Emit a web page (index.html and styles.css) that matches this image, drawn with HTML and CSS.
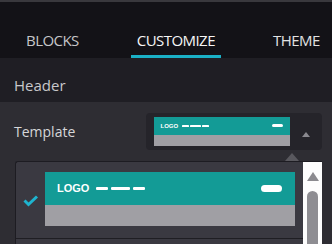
FILE: index.html
```html
<!DOCTYPE html>
<html lang="en">
<head>
  <meta charset="UTF-8" />
  <meta name="viewport" content="width=device-width, initial-scale=1.0"/>
  <title>Customize</title>
  <link rel="stylesheet" href="styles.css">
</head>
<body>
  <div class="tabs">
    <div class="tab">BLOCKS</div>
    <div class="tab active">CUSTOMIZE</div>
    <div class="tab">THEME</div>
  </div>

  <div class="section-title">Header</div>

  <div class="field">
    <label>Template</label>
    <div class="select">
      <div class="preview small">
        <div class="preview-bar">
          <span class="preview-logo">LOGO</span>
          <span class="dash"></span><span class="dash long"></span><span class="dash"></span>
          <span class="pill"></span>
        </div>
        <div class="preview-body"></div>
      </div>
      <div class="select-arrow"><span class="tri"></span></div>
    </div>

    <div class="dropdown">
      <span class="pointer"></span>
      <div class="options">
        <div class="option">
          <div class="check">
            <svg width="16" height="12" viewBox="0 0 16 12">
              <polyline points="1.5,5.5 5.5,9.5 14,1.5" fill="none" stroke="#1eb4cf" stroke-width="3"/>
            </svg>
          </div>
          <div class="preview big">
            <div class="preview-bar">
              <span class="preview-logo">LOGO</span>
              <span class="dash"></span><span class="dash long"></span><span class="dash"></span>
              <span class="pill"></span>
            </div>
            <div class="preview-body"></div>
          </div>
        </div>
      </div>
      <div class="scrollbar">
        <span class="scroll-up"></span>
        <span class="thumb"></span>
      </div>
    </div>
  </div>
</body>
</html>
```

FILE: styles.css
```css
body {
  margin: 0;
  padding: 0;
  width: 332px;
  height: 244px;
  overflow: hidden;
  background: #2e2d33;
  font-family: 'Open Sans', 'Noto Sans', sans-serif;
}

.tabs {
  display: flex;
  align-items: flex-end;
  gap: 46px;
  height: 56px;
  padding-left: 20px;
  background: #131217;
  border-top: 2px solid #39383d;
}

.tab {
  padding: 0 6px 5px;
  line-height: 20px;
  font-size: 15px;
  letter-spacing: -0.55px;
  color: #c6c6c9;
  border-bottom: 3px solid transparent;
}

.tab.active {
  color: #f6f6f6;
  border-bottom-color: #1ab0c6;
}

.tab:last-child {
  color: #e2e2e2;
}

.section-title {
  height: 27px;
  padding: 17px 0 0 14px;
  line-height: 20px;
  font-size: 15px;
  color: #c8c8cb;
  background: #1f1e24;
}

.field {
  position: relative;
  display: flex;
  align-items: center;
  justify-content: space-between;
  padding: 11px 10px 0 14px;
}

label {
  font-size: 14px;
  color: #d6d6d8;
}

.select {
  display: flex;
  align-items: center;
  width: 168px;
  height: 37px;
  padding-left: 8px;
  background: #25242a;
  border-radius: 4px;
}

.select-arrow {
  flex: 1;
  display: flex;
  justify-content: center;
  padding-top: 5px;
}

.tri {
  border-left: 4.5px solid transparent;
  border-right: 4.5px solid transparent;
  border-bottom: 5px solid #8a898f;
}

/* template thumbnail, sized in em so it scales */
.preview {
  width: 22.73em;
  flex-shrink: 0;
}

.preview.small {
  font-size: 6px;
}

.preview.big {
  font-size: 11px;
}

.preview-bar {
  display: flex;
  align-items: center;
  height: 3em;
  padding: 0 1.18em 0 1.09em;
  background: #139b96;
}

.preview-logo {
  font-family: 'Liberation Sans', Arial, sans-serif;
  font-weight: bold;
  color: #fff;
  line-height: 1;
  margin-right: 0.64em;
}

.dash {
  width: 1.09em;
  height: 0.36em;
  margin-right: 0.27em;
  background: #fff;
  border-radius: 0.1em;
}

.dash.long {
  width: 1.73em;
}

.pill {
  width: 1.91em;
  height: 0.55em;
  margin-left: auto;
  background: #fff;
  border-radius: 1em;
}

.preview-body {
  height: 1.91em;
  background: #a09fa4;
}

.dropdown {
  position: absolute;
  top: 59px;
  left: 15px;
  width: 306px;
  height: 82px;
  display: flex;
  background: #3a3941;
  border-top: 1px solid #1d1c22;
  border-left: 1px solid #1d1c22;
  border-top-left-radius: 3px;
}

.pointer {
  position: absolute;
  top: -9px;
  left: 269px;
  border-left: 7.5px solid transparent;
  border-right: 7.5px solid transparent;
  border-bottom: 8px solid #59585e;
}

.options {
  flex: 1;
}

.option {
  display: flex;
  align-items: center;
  padding: 10px 8px 12px 0;
  border-bottom: 1px solid #1f1e23;
}

.check {
  width: 29px;
  display: flex;
  justify-content: center;
  padding-top: 3px;
}

.scrollbar {
  width: 19px;
  display: flex;
  flex-direction: column;
  align-items: center;
  background: #fdfdfd;
}

.scroll-up {
  margin-top: 10px;
  border-left: 6px solid transparent;
  border-right: 6px solid transparent;
  border-bottom: 9px solid #8b8a8f;
}

.thumb {
  flex: 1;
  width: 11px;
  margin-top: 10px;
  background: #8e8d92;
  border-radius: 5.5px 5.5px 0 0;
}
```
